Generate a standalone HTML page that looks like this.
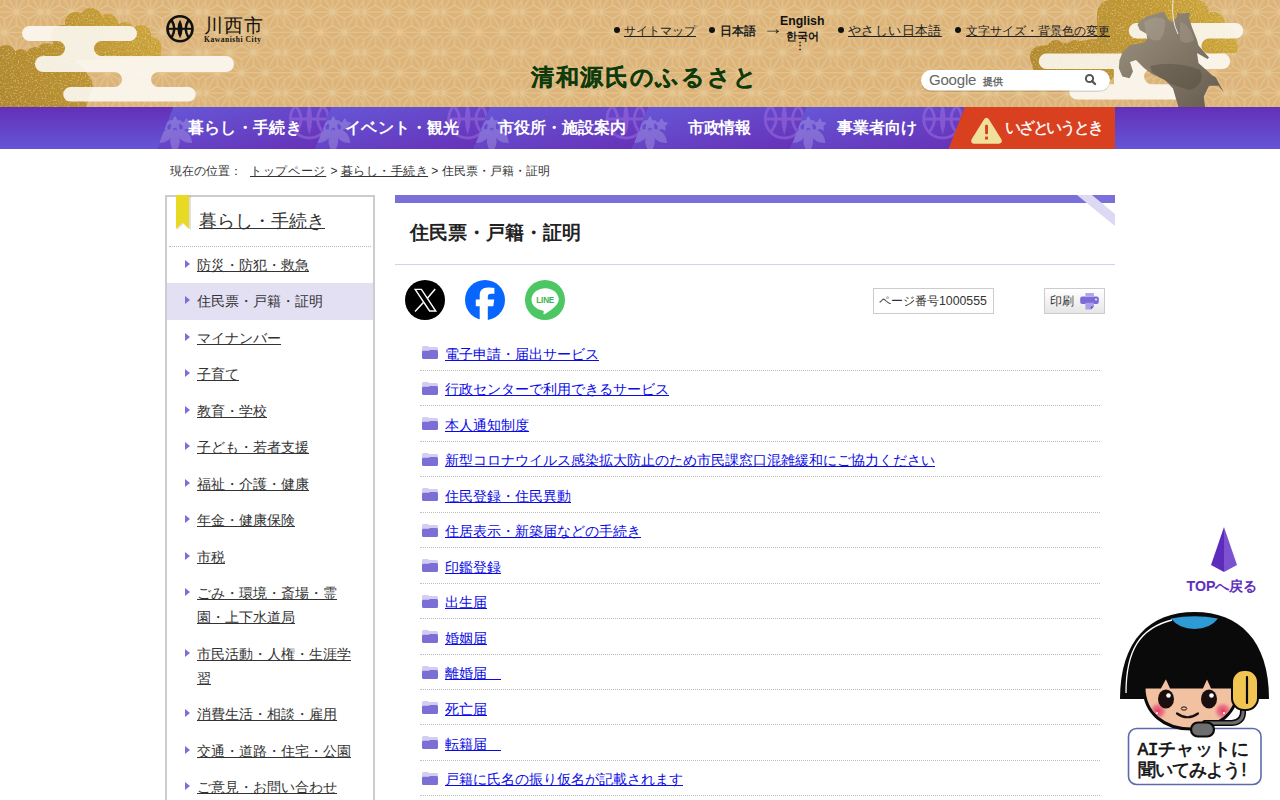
<!DOCTYPE html>
<html lang="ja"><head><meta charset="utf-8">
<style>
*{margin:0;padding:0;box-sizing:border-box}
html,body{width:1280px;height:800px;overflow:hidden;background:#fff}
body{font-family:"Liberation Sans",sans-serif;color:#222;position:relative}
.abs{position:absolute}
a{color:inherit}
#hdr{position:absolute;left:0;top:0;width:1280px;height:107px;overflow:hidden}
#nav{position:absolute;left:0;top:107px;width:1280px;height:42px;background:linear-gradient(#6330b8,#6555d5);overflow:hidden}
.toplink{position:absolute;font-size:13px;color:#222;top:22px;white-space:nowrap}
.toplink u{text-decoration:underline}
.dot{position:absolute;width:6px;height:6px;border-radius:50%;background:#111}
.navt{position:absolute;top:116px;color:#fff;font-weight:bold;font-size:16px;white-space:nowrap;line-height:24px}
#crumb{position:absolute;left:170px;top:162px;font-size:12px;color:#333;white-space:nowrap;line-height:18px}
#side{position:absolute;left:165px;top:195px;width:210px;height:620px;border:2px solid #ccc;border-bottom:none}
#side .ttl{position:absolute;left:32px;top:12px;font-size:18px;color:#333;text-decoration:underline}
#side .sep{position:absolute;left:2px;top:49px;width:202px;border-top:1px dotted #bbb}
.si{position:absolute;left:0;width:206px;font-size:14px;line-height:24px;color:#333}
.si span{position:absolute;left:30px;text-decoration:underline;white-space:nowrap}
.si i{position:absolute;left:18px;top:13px;width:0;height:0;border-left:5px solid #7b6fd9;border-top:4px solid transparent;border-bottom:4px solid transparent}
#main{position:absolute;left:395px;top:195px;width:720px}
.li{position:absolute;left:25px;width:680px;height:35.46px;border-bottom:1px dotted #bdbdbd}
.li a{position:absolute;left:25px;top:6.5px;font-size:14px;line-height:24px;text-decoration:underline;white-space:nowrap;color:#0a0ae6}
.fold{position:absolute;left:2px;top:11px;width:16px;height:13px}
</style></head><body>
<div id="hdr">
<svg width="1280" height="107" style="position:absolute;left:0;top:0">
<defs>
<pattern id="asa" patternUnits="userSpaceOnUse" width="79" height="40.5" x="46.5" y="12">
<rect width="79" height="40.5" fill="#dcb47a"/>
<path d="M-35.00 -20.25L-11.00 -20.25 M-35.00 -20.25L-23.00 0.00 M-35.00 -20.25L-47.00 0.00 M-23.00 -13.50L-35.00 -20.25 M-23.00 -13.50L-11.00 -20.25 M-23.00 -13.50L-23.00 0.00 M-35.00 -6.75L-35.00 -20.25 M-35.00 -6.75L-47.00 0.00 M-35.00 -6.75L-23.00 0.00 M-11.00 -20.25L13.00 -20.25 M-11.00 -20.25L1.00 0.00 M-11.00 -20.25L-23.00 0.00 M1.00 -13.50L-11.00 -20.25 M1.00 -13.50L13.00 -20.25 M1.00 -13.50L1.00 0.00 M-11.00 -6.75L-11.00 -20.25 M-11.00 -6.75L-23.00 0.00 M-11.00 -6.75L1.00 0.00 M13.00 -20.25L37.00 -20.25 M13.00 -20.25L25.00 0.00 M13.00 -20.25L1.00 0.00 M25.00 -13.50L13.00 -20.25 M25.00 -13.50L37.00 -20.25 M25.00 -13.50L25.00 0.00 M13.00 -6.75L13.00 -20.25 M13.00 -6.75L1.00 0.00 M13.00 -6.75L25.00 0.00 M37.00 -20.25L61.00 -20.25 M37.00 -20.25L49.00 0.00 M37.00 -20.25L25.00 0.00 M49.00 -13.50L37.00 -20.25 M49.00 -13.50L61.00 -20.25 M49.00 -13.50L49.00 0.00 M37.00 -6.75L37.00 -20.25 M37.00 -6.75L25.00 0.00 M37.00 -6.75L49.00 0.00 M61.00 -20.25L85.00 -20.25 M61.00 -20.25L73.00 0.00 M61.00 -20.25L49.00 0.00 M73.00 -13.50L61.00 -20.25 M73.00 -13.50L85.00 -20.25 M73.00 -13.50L73.00 0.00 M61.00 -6.75L61.00 -20.25 M61.00 -6.75L49.00 0.00 M61.00 -6.75L73.00 0.00 M85.00 -20.25L109.00 -20.25 M85.00 -20.25L97.00 0.00 M85.00 -20.25L73.00 0.00 M97.00 -13.50L85.00 -20.25 M97.00 -13.50L109.00 -20.25 M97.00 -13.50L97.00 0.00 M85.00 -6.75L85.00 -20.25 M85.00 -6.75L73.00 0.00 M85.00 -6.75L97.00 0.00 M109.00 -20.25L133.00 -20.25 M109.00 -20.25L121.00 0.00 M109.00 -20.25L97.00 0.00 M121.00 -13.50L109.00 -20.25 M121.00 -13.50L133.00 -20.25 M121.00 -13.50L121.00 0.00 M109.00 -6.75L109.00 -20.25 M109.00 -6.75L97.00 0.00 M109.00 -6.75L121.00 0.00 M-47.00 0.00L-23.00 0.00 M-47.00 0.00L-35.00 20.25 M-47.00 0.00L-59.00 20.25 M-35.00 6.75L-47.00 0.00 M-35.00 6.75L-23.00 0.00 M-35.00 6.75L-35.00 20.25 M-47.00 13.50L-47.00 0.00 M-47.00 13.50L-59.00 20.25 M-47.00 13.50L-35.00 20.25 M-23.00 0.00L1.00 0.00 M-23.00 0.00L-11.00 20.25 M-23.00 0.00L-35.00 20.25 M-11.00 6.75L-23.00 0.00 M-11.00 6.75L1.00 0.00 M-11.00 6.75L-11.00 20.25 M-23.00 13.50L-23.00 0.00 M-23.00 13.50L-35.00 20.25 M-23.00 13.50L-11.00 20.25 M1.00 0.00L25.00 0.00 M1.00 0.00L13.00 20.25 M1.00 0.00L-11.00 20.25 M13.00 6.75L1.00 0.00 M13.00 6.75L25.00 0.00 M13.00 6.75L13.00 20.25 M1.00 13.50L1.00 0.00 M1.00 13.50L-11.00 20.25 M1.00 13.50L13.00 20.25 M25.00 0.00L49.00 0.00 M25.00 0.00L37.00 20.25 M25.00 0.00L13.00 20.25 M37.00 6.75L25.00 0.00 M37.00 6.75L49.00 0.00 M37.00 6.75L37.00 20.25 M25.00 13.50L25.00 0.00 M25.00 13.50L13.00 20.25 M25.00 13.50L37.00 20.25 M49.00 0.00L73.00 0.00 M49.00 0.00L61.00 20.25 M49.00 0.00L37.00 20.25 M61.00 6.75L49.00 0.00 M61.00 6.75L73.00 0.00 M61.00 6.75L61.00 20.25 M49.00 13.50L49.00 0.00 M49.00 13.50L37.00 20.25 M49.00 13.50L61.00 20.25 M73.00 0.00L97.00 0.00 M73.00 0.00L85.00 20.25 M73.00 0.00L61.00 20.25 M85.00 6.75L73.00 0.00 M85.00 6.75L97.00 0.00 M85.00 6.75L85.00 20.25 M73.00 13.50L73.00 0.00 M73.00 13.50L61.00 20.25 M73.00 13.50L85.00 20.25 M97.00 0.00L121.00 0.00 M97.00 0.00L109.00 20.25 M97.00 0.00L85.00 20.25 M109.00 6.75L97.00 0.00 M109.00 6.75L121.00 0.00 M109.00 6.75L109.00 20.25 M97.00 13.50L97.00 0.00 M97.00 13.50L85.00 20.25 M97.00 13.50L109.00 20.25 M-35.00 20.25L-11.00 20.25 M-35.00 20.25L-23.00 40.50 M-35.00 20.25L-47.00 40.50 M-23.00 27.00L-35.00 20.25 M-23.00 27.00L-11.00 20.25 M-23.00 27.00L-23.00 40.50 M-35.00 33.75L-35.00 20.25 M-35.00 33.75L-47.00 40.50 M-35.00 33.75L-23.00 40.50 M-11.00 20.25L13.00 20.25 M-11.00 20.25L1.00 40.50 M-11.00 20.25L-23.00 40.50 M1.00 27.00L-11.00 20.25 M1.00 27.00L13.00 20.25 M1.00 27.00L1.00 40.50 M-11.00 33.75L-11.00 20.25 M-11.00 33.75L-23.00 40.50 M-11.00 33.75L1.00 40.50 M13.00 20.25L37.00 20.25 M13.00 20.25L25.00 40.50 M13.00 20.25L1.00 40.50 M25.00 27.00L13.00 20.25 M25.00 27.00L37.00 20.25 M25.00 27.00L25.00 40.50 M13.00 33.75L13.00 20.25 M13.00 33.75L1.00 40.50 M13.00 33.75L25.00 40.50 M37.00 20.25L61.00 20.25 M37.00 20.25L49.00 40.50 M37.00 20.25L25.00 40.50 M49.00 27.00L37.00 20.25 M49.00 27.00L61.00 20.25 M49.00 27.00L49.00 40.50 M37.00 33.75L37.00 20.25 M37.00 33.75L25.00 40.50 M37.00 33.75L49.00 40.50 M61.00 20.25L85.00 20.25 M61.00 20.25L73.00 40.50 M61.00 20.25L49.00 40.50 M73.00 27.00L61.00 20.25 M73.00 27.00L85.00 20.25 M73.00 27.00L73.00 40.50 M61.00 33.75L61.00 20.25 M61.00 33.75L49.00 40.50 M61.00 33.75L73.00 40.50 M85.00 20.25L109.00 20.25 M85.00 20.25L97.00 40.50 M85.00 20.25L73.00 40.50 M97.00 27.00L85.00 20.25 M97.00 27.00L109.00 20.25 M97.00 27.00L97.00 40.50 M85.00 33.75L85.00 20.25 M85.00 33.75L73.00 40.50 M85.00 33.75L97.00 40.50 M109.00 20.25L133.00 20.25 M109.00 20.25L121.00 40.50 M109.00 20.25L97.00 40.50 M121.00 27.00L109.00 20.25 M121.00 27.00L133.00 20.25 M121.00 27.00L121.00 40.50 M109.00 33.75L109.00 20.25 M109.00 33.75L97.00 40.50 M109.00 33.75L121.00 40.50 M-47.00 40.50L-23.00 40.50 M-47.00 40.50L-35.00 60.75 M-47.00 40.50L-59.00 60.75 M-35.00 47.25L-47.00 40.50 M-35.00 47.25L-23.00 40.50 M-35.00 47.25L-35.00 60.75 M-47.00 54.00L-47.00 40.50 M-47.00 54.00L-59.00 60.75 M-47.00 54.00L-35.00 60.75 M-23.00 40.50L1.00 40.50 M-23.00 40.50L-11.00 60.75 M-23.00 40.50L-35.00 60.75 M-11.00 47.25L-23.00 40.50 M-11.00 47.25L1.00 40.50 M-11.00 47.25L-11.00 60.75 M-23.00 54.00L-23.00 40.50 M-23.00 54.00L-35.00 60.75 M-23.00 54.00L-11.00 60.75 M1.00 40.50L25.00 40.50 M1.00 40.50L13.00 60.75 M1.00 40.50L-11.00 60.75 M13.00 47.25L1.00 40.50 M13.00 47.25L25.00 40.50 M13.00 47.25L13.00 60.75 M1.00 54.00L1.00 40.50 M1.00 54.00L-11.00 60.75 M1.00 54.00L13.00 60.75 M25.00 40.50L49.00 40.50 M25.00 40.50L37.00 60.75 M25.00 40.50L13.00 60.75 M37.00 47.25L25.00 40.50 M37.00 47.25L49.00 40.50 M37.00 47.25L37.00 60.75 M25.00 54.00L25.00 40.50 M25.00 54.00L13.00 60.75 M25.00 54.00L37.00 60.75 M49.00 40.50L73.00 40.50 M49.00 40.50L61.00 60.75 M49.00 40.50L37.00 60.75 M61.00 47.25L49.00 40.50 M61.00 47.25L73.00 40.50 M61.00 47.25L61.00 60.75 M49.00 54.00L49.00 40.50 M49.00 54.00L37.00 60.75 M49.00 54.00L61.00 60.75 M73.00 40.50L97.00 40.50 M73.00 40.50L85.00 60.75 M73.00 40.50L61.00 60.75 M85.00 47.25L73.00 40.50 M85.00 47.25L97.00 40.50 M85.00 47.25L85.00 60.75 M73.00 54.00L73.00 40.50 M73.00 54.00L61.00 60.75 M73.00 54.00L85.00 60.75 M97.00 40.50L121.00 40.50 M97.00 40.50L109.00 60.75 M97.00 40.50L85.00 60.75 M109.00 47.25L97.00 40.50 M109.00 47.25L121.00 40.50 M109.00 47.25L109.00 60.75 M97.00 54.00L97.00 40.50 M97.00 54.00L85.00 60.75 M97.00 54.00L109.00 60.75 M-35.00 60.75L-11.00 60.75 M-35.00 60.75L-23.00 81.00 M-35.00 60.75L-47.00 81.00 M-23.00 67.50L-35.00 60.75 M-23.00 67.50L-11.00 60.75 M-23.00 67.50L-23.00 81.00 M-35.00 74.25L-35.00 60.75 M-35.00 74.25L-47.00 81.00 M-35.00 74.25L-23.00 81.00 M-11.00 60.75L13.00 60.75 M-11.00 60.75L1.00 81.00 M-11.00 60.75L-23.00 81.00 M1.00 67.50L-11.00 60.75 M1.00 67.50L13.00 60.75 M1.00 67.50L1.00 81.00 M-11.00 74.25L-11.00 60.75 M-11.00 74.25L-23.00 81.00 M-11.00 74.25L1.00 81.00 M13.00 60.75L37.00 60.75 M13.00 60.75L25.00 81.00 M13.00 60.75L1.00 81.00 M25.00 67.50L13.00 60.75 M25.00 67.50L37.00 60.75 M25.00 67.50L25.00 81.00 M13.00 74.25L13.00 60.75 M13.00 74.25L1.00 81.00 M13.00 74.25L25.00 81.00 M37.00 60.75L61.00 60.75 M37.00 60.75L49.00 81.00 M37.00 60.75L25.00 81.00 M49.00 67.50L37.00 60.75 M49.00 67.50L61.00 60.75 M49.00 67.50L49.00 81.00 M37.00 74.25L37.00 60.75 M37.00 74.25L25.00 81.00 M37.00 74.25L49.00 81.00 M61.00 60.75L85.00 60.75 M61.00 60.75L73.00 81.00 M61.00 60.75L49.00 81.00 M73.00 67.50L61.00 60.75 M73.00 67.50L85.00 60.75 M73.00 67.50L73.00 81.00 M61.00 74.25L61.00 60.75 M61.00 74.25L49.00 81.00 M61.00 74.25L73.00 81.00 M85.00 60.75L109.00 60.75 M85.00 60.75L97.00 81.00 M85.00 60.75L73.00 81.00 M97.00 67.50L85.00 60.75 M97.00 67.50L109.00 60.75 M97.00 67.50L97.00 81.00 M85.00 74.25L85.00 60.75 M85.00 74.25L73.00 81.00 M85.00 74.25L97.00 81.00 M109.00 60.75L133.00 60.75 M109.00 60.75L121.00 81.00 M109.00 60.75L97.00 81.00 M121.00 67.50L109.00 60.75 M121.00 67.50L133.00 60.75 M121.00 67.50L121.00 81.00 M109.00 74.25L109.00 60.75 M109.00 74.25L97.00 81.00 M109.00 74.25L121.00 81.00" stroke="#e6c793" stroke-width="1.1" fill="none"/>
</pattern>
<linearGradient id="goldL" gradientUnits="userSpaceOnUse" x1="160" y1="10" x2="0" y2="107">
<stop offset="0" stop-color="#d6ae3a"/><stop offset="0.5" stop-color="#c0942c"/><stop offset="1" stop-color="#b08428"/>
</linearGradient>
<filter id="grain" x="0" y="0" width="100%" height="100%">
<feTurbulence type="fractalNoise" baseFrequency="0.6" numOctaves="2" seed="4" result="n"/>
<feColorMatrix in="n" type="matrix" values="0 0 0 0 0.42  0 0 0 0 0.29  0 0 0 0 0.07  0 0 2.6 0 -1.2" result="d"/>
<feComposite in="d" in2="SourceGraphic" operator="in" result="d2"/>
<feColorMatrix in="n" type="matrix" values="0 0 0 0 0.86  0 0 0 0 0.72  0 0 0 0 0.3  0 1.6 0 0 -0.85" result="l"/>
<feComposite in="l" in2="SourceGraphic" operator="in" result="l2"/>
<feMerge><feMergeNode in="SourceGraphic"/><feMergeNode in="d2"/><feMergeNode in="l2"/></feMerge>
</filter>
<linearGradient id="goldR" gradientUnits="userSpaceOnUse" x1="1030" y1="80" x2="1237" y2="0">
<stop offset="0" stop-color="#b48828"/><stop offset="0.6" stop-color="#c69a30"/><stop offset="1" stop-color="#d8b03a"/>
</linearGradient>
<linearGradient id="bronze" x1="0" y1="0" x2="1" y2="1">
<stop offset="0" stop-color="#9e9483"/><stop offset="0.5" stop-color="#837868"/><stop offset="1" stop-color="#655b4d"/>
</linearGradient>
</defs>
<rect width="1280" height="107" fill="url(#asa)"/>
<!-- left gold clouds -->
<g fill="url(#goldL)" filter="url(#grain)">
<circle cx="6" cy="55" r="10"/><circle cx="21" cy="58" r="9"/><circle cx="35" cy="56" r="9"/><circle cx="46" cy="52" r="9"/>
<rect x="0" y="54" width="50" height="53"/>
<polygon points="40,50 52,44 65,50 85,70 93,86 86,107 0,107"/>
<circle cx="80" cy="84" r="12"/>
<circle cx="62" cy="36" r="11"/><circle cx="76" cy="23" r="11"/><circle cx="91" cy="19" r="11"/><circle cx="108" cy="24" r="10"/><circle cx="125" cy="31" r="9"/><circle cx="141" cy="35" r="10"/><circle cx="152" cy="46" r="9"/><circle cx="154" cy="48.5" r="7.5"/>
<polygon points="52,45 62,30 76,16 91,12 108,18 125,26 141,30 161,45 161,56 94,60 65,60"/>
</g>
<!-- left white clouds -->
<g fill="#fcf9f4" fill-opacity="0.9">
<path d="M29.5 26H129.5A7.5 7.5 0 0 1 129.5 41H101.5A7.5 7.5 0 0 0 101.5 56H226A8 8 0 0 1 226 72H158.5A7.5 7.5 0 0 0 158.5 87H188.5A7.3 7.3 0 0 1 188.5 101.6H70.5A7.3 7.3 0 0 1 70.5 87H114.5A7.5 7.5 0 0 0 114.5 72H43A8 8 0 0 1 43 56H57.5A7.5 7.5 0 0 0 57.5 41H29.5A7.5 7.5 0 0 1 29.5 26Z"/>
</g>
<!-- right gold cloud -->
<g fill="url(#goldR)" filter="url(#grain)">
<circle cx="1104" cy="73" r="10"/><circle cx="1040" cy="56" r="10"/><circle cx="1056" cy="50" r="10"/><circle cx="1075" cy="49" r="9"/><circle cx="1092" cy="48" r="9"/>
<circle cx="1111" cy="14" r="14"/><circle cx="1196" cy="13" r="13"/><circle cx="1213" cy="24" r="12"/><circle cx="1226" cy="36" r="10"/><circle cx="1230" cy="45.5" r="7.5"/>
<rect x="1111" y="0" width="85" height="45"/><rect x="1097" y="14" width="120" height="40"/>
<polygon points="1030,58 1040,46 1097,39 1200,39 1237.5,45 1237.5,53 1160,53 1110,70 1104,83 1034,72"/>
</g>
<g fill="#fcf9f4" fill-opacity="0.9">
<path d="M1136.5 23H1235.5A7.7 7.7 0 0 1 1235.5 38.4H1209A7.6 7.6 0 0 0 1209 53.6H1222.5A7.7 7.7 0 0 1 1222.5 69H1151.6A7.6 7.6 0 0 0 1151.6 84.2H1182A7.6 7.6 0 0 1 1182 99.5H1077A7.6 7.6 0 0 1 1077 84.2H1114V69H1046.5A7.7 7.7 0 0 1 1046.5 53.6H1160V38.4H1136.5A7.7 7.7 0 0 1 1136.5 23Z"/>
</g>
<!-- statue -->
<g>
<path fill="url(#bronze)" d="M1137.5 24.8L1140.0 20.5L1148.0 16.0L1157.0 13.5L1163.8 11.2L1167.5 18.8L1172.0 22.0L1177.0 17.0L1177.0 12.7L1181.0 13.4L1190.0 12.7L1189.0 17.4L1191.8 26.8L1197.0 40.0L1198.5 45.5L1209.0 57.6L1207.5 59.0L1197.0 53.0L1198.5 63.0L1211.8 75.0L1215.9 77.6L1223.9 92.4L1218.5 85.7L1209.0 85.7L1203.8 96.4L1205.0 107.0L1178.4 107.0L1173.0 88.4L1165.0 80.0L1152.0 74.0L1144.0 68.0L1136.0 60.0L1130.0 62.0L1133.0 71.5L1129.6 78.2L1122.4 76.4L1118.8 68.3L1119.5 60.0L1122.5 52.5L1130.0 45.0L1143.5 42.8L1147.3 39.0L1146.5 33.8L1139.8 30.0Z"/>
</g>
<g opacity="0.35">
<path d="M1144 22Q1156 14 1165 20Q1166 32 1160 40Q1150 42 1146 34Z" fill="#b8ae9c"/>
<path d="M1180 22Q1190 24 1194 40Q1186 46 1180 40Z" fill="#b0a694"/>
<path d="M1150 66Q1175 60 1200 70Q1206 84 1190 90Q1170 86 1152 72Z" fill="#4a4236"/>
</g>
<path d="M1173 0Q1171 20 1178 34" fill="none" stroke="#f0ece0" stroke-width="1"/>
<!-- logo -->
<g>
<circle cx="180" cy="28.8" r="12.5" fill="none" stroke="#111" stroke-width="2.6"/>
<line x1="167" y1="28.8" x2="193" y2="28.8" stroke="#111" stroke-width="2"/>
<path d="M180 19.5Q185.2 28.8 180 38.2Q174.8 28.8 180 19.5Z" fill="#111"/>
<path d="M171.5 20Q177 28.8 171.5 37.6" fill="none" stroke="#111" stroke-width="2.5"/>
<path d="M188.5 20Q183 28.8 188.5 37.6" fill="none" stroke="#111" stroke-width="2.5"/>
</g>
<!-- search -->
<rect x="921" y="71" width="189" height="21" rx="10.5" fill="#000" opacity="0.12"/><rect x="921" y="70" width="189" height="20.5" rx="10.25" fill="#fff"/><circle cx="1089.5" cy="78.5" r="3.6" fill="none" stroke="#555" stroke-width="2"/><path d="M1092 81L1095 84" stroke="#555" stroke-width="2.4" stroke-linecap="round"/>
</svg>
<div class="abs" style="left:203.5px;top:12.5px;font-size:19px;font-family:'Liberation Serif',serif;color:#111;letter-spacing:1.2px">川西市</div>
<div class="abs" style="left:204px;top:34.5px;font-size:7.5px;font-family:'Liberation Serif',serif;font-weight:bold;color:#111;letter-spacing:0.55px">Kawanishi City</div>
<div class="dot" style="left:614px;top:27px"></div>
<div class="toplink" style="left:624px;font-size:12px;top:23px"><u>サイトマップ</u></div>
<div class="dot" style="left:709px;top:27px"></div>
<div class="toplink" style="left:720px;font-weight:bold;font-size:12.3px;top:23px">日本語</div>
<div class="toplink" style="left:763px;top:18px;font-size:18px;transform:scaleX(1.1);transform-origin:left">→</div>
<div class="abs" style="left:780px;top:14px;font-size:12.3px;font-weight:bold;color:#111">English</div>
<div class="abs" style="left:786px;top:28.5px;font-size:11px;color:#111;font-weight:bold">한국어</div>
<div class="abs" style="left:795px;top:40px;font-size:10px;line-height:11px;color:#111;font-weight:bold">⋮</div>
<div class="dot" style="left:838px;top:27px"></div>
<div class="toplink" style="left:848px;font-size:13px;letter-spacing:0.4px"><u>やさしい日本語</u></div>
<div class="dot" style="left:955px;top:27px"></div>
<div class="toplink" style="left:966px;font-size:12px;top:23px"><u>文字サイズ・背景色の変更</u></div>
<div class="abs" style="left:531px;top:62px;font-size:23px;font-weight:bold;color:#0f3a0c;font-family:'Liberation Serif',serif;letter-spacing:1.7px;-webkit-text-stroke:0.25px #0f3a0c">清和源氏のふるさと</div>
<div class="abs" style="left:929px;top:71px;font-size:15px;color:#666;letter-spacing:-0.2px">Google</div>
<div class="abs" style="left:983px;top:75px;font-size:10px;color:#666;font-weight:bold">提供</div>
</div>
<div id="nav">
<svg width="1280" height="42" style="position:absolute;left:0;top:0">
<defs>
<linearGradient id="itm" x1="0" y1="0" x2="1" y2="1"><stop offset="0" stop-color="#6658d8"/><stop offset="1" stop-color="#6630b6"/></linearGradient>
<clipPath id="c0"><polygon points="173.0,0 331.3,0 315.3,42 157.0,42"/></clipPath>
<clipPath id="c1"><polygon points="331.3,0 489.7,0 473.7,42 315.3,42"/></clipPath>
<clipPath id="c2"><polygon points="489.7,0 648.0,0 632.0,42 473.7,42"/></clipPath>
<clipPath id="c3"><polygon points="648.0,0 806.3,0 790.3,42 632.0,42"/></clipPath>
<clipPath id="c4"><polygon points="806.3,0 964.7,0 948.7,42 790.3,42"/></clipPath>
</defs>
<g clip-path="url(#c0)"><polygon points="173.0,0 331.3,0 315.3,42 157.0,42" fill="url(#itm)"/><g fill="#fff" opacity="0.2"><path d="M173.5 22C180.25 28.3 179.5 36.7 173.5 43C167.5 36.7 166.75 28.3 173.5 22Z" transform="rotate(48 173.5 22)"/><path d="M175.0 22C181.75 29.2 181.0 38.8 175.0 46C169.0 38.8 168.25 29.2 175.0 22Z" transform="rotate(0 175.0 22)"/><path d="M176.5 22C183.25 28.3 182.5 36.7 176.5 43C170.5 36.7 169.75 28.3 176.5 22Z" transform="rotate(-48 176.5 22)"/><path d="M163.5 12.5L165.1 15.8L168.7 16.3L166.1 18.8L166.7 22.4L163.5 20.7L160.3 22.4L160.9 18.8L158.3 16.3L161.9 15.8Z" stroke="#fff" stroke-width="2" stroke-linejoin="round"/><path d="M175.0 10.5L176.8 14.1L180.7 14.6L177.9 17.4L178.5 21.4L175.0 19.5L171.5 21.4L172.1 17.4L169.3 14.6L173.2 14.1Z" stroke="#fff" stroke-width="2" stroke-linejoin="round"/><path d="M186.5 12.5L188.1 15.8L191.7 16.3L189.1 18.8L189.7 22.4L186.5 20.7L183.3 22.4L183.9 18.8L181.3 16.3L184.9 15.8Z" stroke="#fff" stroke-width="2" stroke-linejoin="round"/></g><g opacity="0.42"><g stroke="#b07ae8" fill="none" stroke-width="2.8"><circle cx="309.3" cy="12" r="19"/><line x1="290.3" y1="12" x2="328.3" y2="12"/><path d="M295.6 -1.3Q306.4 12 295.6 25.3"/><path d="M323.0 -1.3Q312.2 12 323.0 25.3"/></g><path d="M309.3 -4.1Q315.0 12 309.3 28.1Q303.6 12 309.3 -4.1Z" fill="#b07ae8"/></g></g>
<g clip-path="url(#c1)"><polygon points="331.3,0 489.7,0 473.7,42 315.3,42" fill="url(#itm)"/><g fill="#fff" opacity="0.2"><path d="M331.8 22C338.55 28.3 337.8 36.7 331.8 43C325.8 36.7 325.05 28.3 331.8 22Z" transform="rotate(48 331.8 22)"/><path d="M333.3 22C340.05 29.2 339.3 38.8 333.3 46C327.3 38.8 326.55 29.2 333.3 22Z" transform="rotate(0 333.3 22)"/><path d="M334.8 22C341.55 28.3 340.8 36.7 334.8 43C328.8 36.7 328.05 28.3 334.8 22Z" transform="rotate(-48 334.8 22)"/><path d="M321.8 12.5L323.4 15.8L327.0 16.3L324.4 18.8L325.0 22.4L321.8 20.7L318.6 22.4L319.2 18.8L316.6 16.3L320.2 15.8Z" stroke="#fff" stroke-width="2" stroke-linejoin="round"/><path d="M333.3 10.5L335.1 14.1L339.0 14.6L336.2 17.4L336.8 21.4L333.3 19.5L329.8 21.4L330.4 17.4L327.6 14.6L331.5 14.1Z" stroke="#fff" stroke-width="2" stroke-linejoin="round"/><path d="M344.8 12.5L346.4 15.8L350.0 16.3L347.4 18.8L348.0 22.4L344.8 20.7L341.6 22.4L342.2 18.8L339.6 16.3L343.2 15.8Z" stroke="#fff" stroke-width="2" stroke-linejoin="round"/></g><g opacity="0.42"><g stroke="#b07ae8" fill="none" stroke-width="2.8"><circle cx="467.7" cy="12" r="19"/><line x1="448.7" y1="12" x2="486.7" y2="12"/><path d="M454.0 -1.3Q464.8 12 454.0 25.3"/><path d="M481.4 -1.3Q470.6 12 481.4 25.3"/></g><path d="M467.7 -4.1Q473.4 12 467.7 28.1Q462.0 12 467.7 -4.1Z" fill="#b07ae8"/></g></g>
<g clip-path="url(#c2)"><polygon points="489.7,0 648.0,0 632.0,42 473.7,42" fill="url(#itm)"/><g fill="#fff" opacity="0.2"><path d="M490.2 22C496.95 28.3 496.2 36.7 490.2 43C484.2 36.7 483.45 28.3 490.2 22Z" transform="rotate(48 490.2 22)"/><path d="M491.7 22C498.45 29.2 497.7 38.8 491.7 46C485.7 38.8 484.95 29.2 491.7 22Z" transform="rotate(0 491.7 22)"/><path d="M493.2 22C499.95 28.3 499.2 36.7 493.2 43C487.2 36.7 486.45 28.3 493.2 22Z" transform="rotate(-48 493.2 22)"/><path d="M480.2 12.5L481.8 15.8L485.4 16.3L482.8 18.8L483.4 22.4L480.2 20.7L477.0 22.4L477.6 18.8L475.0 16.3L478.6 15.8Z" stroke="#fff" stroke-width="2" stroke-linejoin="round"/><path d="M491.7 10.5L493.5 14.1L497.4 14.6L494.6 17.4L495.2 21.4L491.7 19.5L488.2 21.4L488.8 17.4L486.0 14.6L489.9 14.1Z" stroke="#fff" stroke-width="2" stroke-linejoin="round"/><path d="M503.2 12.5L504.8 15.8L508.4 16.3L505.8 18.8L506.4 22.4L503.2 20.7L500.0 22.4L500.6 18.8L498.0 16.3L501.6 15.8Z" stroke="#fff" stroke-width="2" stroke-linejoin="round"/></g><g opacity="0.42"><g stroke="#b07ae8" fill="none" stroke-width="2.8"><circle cx="626.0" cy="12" r="19"/><line x1="607.0" y1="12" x2="645.0" y2="12"/><path d="M612.3 -1.3Q623.1 12 612.3 25.3"/><path d="M639.7 -1.3Q628.9 12 639.7 25.3"/></g><path d="M626.0 -4.1Q631.7 12 626.0 28.1Q620.3 12 626.0 -4.1Z" fill="#b07ae8"/></g></g>
<g clip-path="url(#c3)"><polygon points="648.0,0 806.3,0 790.3,42 632.0,42" fill="url(#itm)"/><g fill="#fff" opacity="0.2"><path d="M648.5 22C655.25 28.3 654.5 36.7 648.5 43C642.5 36.7 641.75 28.3 648.5 22Z" transform="rotate(48 648.5 22)"/><path d="M650.0 22C656.75 29.2 656.0 38.8 650.0 46C644.0 38.8 643.25 29.2 650.0 22Z" transform="rotate(0 650.0 22)"/><path d="M651.5 22C658.25 28.3 657.5 36.7 651.5 43C645.5 36.7 644.75 28.3 651.5 22Z" transform="rotate(-48 651.5 22)"/><path d="M638.5 12.5L640.1 15.8L643.7 16.3L641.1 18.8L641.7 22.4L638.5 20.7L635.3 22.4L635.9 18.8L633.3 16.3L636.9 15.8Z" stroke="#fff" stroke-width="2" stroke-linejoin="round"/><path d="M650.0 10.5L651.8 14.1L655.7 14.6L652.9 17.4L653.5 21.4L650.0 19.5L646.5 21.4L647.1 17.4L644.3 14.6L648.2 14.1Z" stroke="#fff" stroke-width="2" stroke-linejoin="round"/><path d="M661.5 12.5L663.1 15.8L666.7 16.3L664.1 18.8L664.7 22.4L661.5 20.7L658.3 22.4L658.9 18.8L656.3 16.3L659.9 15.8Z" stroke="#fff" stroke-width="2" stroke-linejoin="round"/></g><g opacity="0.42"><g stroke="#b07ae8" fill="none" stroke-width="2.8"><circle cx="784.3" cy="12" r="19"/><line x1="765.3" y1="12" x2="803.3" y2="12"/><path d="M770.6 -1.3Q781.4 12 770.6 25.3"/><path d="M798.0 -1.3Q787.1 12 798.0 25.3"/></g><path d="M784.3 -4.1Q790.0 12 784.3 28.1Q778.6 12 784.3 -4.1Z" fill="#b07ae8"/></g></g>
<g clip-path="url(#c4)"><polygon points="806.3,0 964.7,0 948.7,42 790.3,42" fill="url(#itm)"/><g fill="#fff" opacity="0.2"><path d="M806.8 22C813.55 28.3 812.8 36.7 806.8 43C800.8 36.7 800.05 28.3 806.8 22Z" transform="rotate(48 806.8 22)"/><path d="M808.3 22C815.05 29.2 814.3 38.8 808.3 46C802.3 38.8 801.55 29.2 808.3 22Z" transform="rotate(0 808.3 22)"/><path d="M809.8 22C816.55 28.3 815.8 36.7 809.8 43C803.8 36.7 803.05 28.3 809.8 22Z" transform="rotate(-48 809.8 22)"/><path d="M796.8 12.5L798.4 15.8L802.0 16.3L799.4 18.8L800.0 22.4L796.8 20.7L793.6 22.4L794.2 18.8L791.6 16.3L795.2 15.8Z" stroke="#fff" stroke-width="2" stroke-linejoin="round"/><path d="M808.3 10.5L810.1 14.1L814.0 14.6L811.2 17.4L811.8 21.4L808.3 19.5L804.8 21.4L805.4 17.4L802.6 14.6L806.5 14.1Z" stroke="#fff" stroke-width="2" stroke-linejoin="round"/><path d="M819.8 12.5L821.4 15.8L825.0 16.3L822.4 18.8L823.0 22.4L819.8 20.7L816.6 22.4L817.2 18.8L814.6 16.3L818.2 15.8Z" stroke="#fff" stroke-width="2" stroke-linejoin="round"/></g><g opacity="0.42"><g stroke="#b07ae8" fill="none" stroke-width="2.8"><circle cx="942.7" cy="12" r="19"/><line x1="923.7" y1="12" x2="961.7" y2="12"/><path d="M929.0 -1.3Q939.9 12 929.0 25.3"/><path d="M956.4 -1.3Q945.6 12 956.4 25.3"/></g><path d="M942.7 -4.1Q948.4 12 942.7 28.1Q937.0 12 942.7 -4.1Z" fill="#b07ae8"/></g></g>
<polygon points="964.7,0 1115,0 1115,42 948.7,42" fill="#d9401f"/>
<path d="M986.5 14L998.8 33.8H974.2Z" fill="#f0e09c" stroke="#f0e09c" stroke-width="6" stroke-linejoin="round"/>
<rect x="985.1" y="17.8" width="2.9" height="9.5" rx="1" fill="#d9401f"/><rect x="985.1" y="29.6" width="2.9" height="2.9" fill="#d9401f"/>
</svg>
</div>
<div class="navt" style="left:187.5px;letter-spacing:0.35px">暮らし・手続き</div>
<div class="navt" style="left:345px;letter-spacing:0.4px">イベント・観光</div>
<div class="navt" style="left:498px">市役所・施設案内</div>
<div class="navt" style="left:688px;letter-spacing:-0.3px">市政情報</div>
<div class="navt" style="left:837px">事業者向け</div>
<div class="navt" style="left:1005px;letter-spacing:-2.2px;font-weight:normal;-webkit-text-stroke:0.35px #fff">いざというとき</div>
<div id="crumb">現在の位置：</div>
<div id="crumb" style="left:250px;letter-spacing:0.7px"><u>トップページ</u></div>
<div id="crumb" style="left:330.5px">&gt;</div>
<div id="crumb" style="left:340.6px;letter-spacing:0.5px"><u>暮らし・手続き</u></div>
<div id="crumb" style="left:431.2px">&gt;</div>
<div id="crumb" style="left:442.2px">住民票・戸籍・証明</div>
<div id="side"><svg class="abs" style="left:8px;top:-2px" width="18" height="38"><path d="M1 0H15V34L8 27.6L1 34Z" fill="#000" opacity="0.12" transform="translate(1,1)"/><path d="M1 0H14V34L7.5 27.6L1 34Z" fill="#e8da22"/></svg><div class="ttl">暮らし・手続き</div><div class="sep"></div>
<div class="si" style="top:49.60px;height:36.50px;"><i></i><span style="top:6.25px;">防災・防犯・救急</span></div>
<div class="si" style="top:86.10px;height:36.50px;background:#e3e0f3;"><i></i><span style="top:6.25px;text-decoration:none">住民票・戸籍・証明</span></div>
<div class="si" style="top:122.60px;height:36.50px;"><i></i><span style="top:6.25px;">マイナンバー</span></div>
<div class="si" style="top:159.10px;height:36.50px;"><i></i><span style="top:6.25px;">子育て</span></div>
<div class="si" style="top:195.60px;height:36.50px;"><i></i><span style="top:6.25px;">教育・学校</span></div>
<div class="si" style="top:232.10px;height:36.50px;"><i></i><span style="top:6.25px;">子ども・若者支援</span></div>
<div class="si" style="top:268.60px;height:36.50px;"><i></i><span style="top:6.25px;">福祉・介護・健康</span></div>
<div class="si" style="top:305.10px;height:36.50px;"><i></i><span style="top:6.25px;">年金・健康保険</span></div>
<div class="si" style="top:341.60px;height:36.50px;"><i></i><span style="top:6.25px;">市税</span></div>
<div class="si" style="top:378.10px;height:60.50px;"><i></i><span style="top:6.25px;">ごみ・環境・斎場・霊<br>園・上下水道局</span></div>
<div class="si" style="top:438.60px;height:60.50px;"><i></i><span style="top:6.25px;">市民活動・人権・生涯学<br>習</span></div>
<div class="si" style="top:499.10px;height:36.50px;"><i></i><span style="top:6.25px;">消費生活・相談・雇用</span></div>
<div class="si" style="top:535.60px;height:36.50px;"><i></i><span style="top:6.25px;">交通・道路・住宅・公園</span></div>
<div class="si" style="top:572.10px;height:36.50px;"><i></i><span style="top:6.25px;">ご意見・お問い合わせ</span></div>
</div>
<div id="main">
<div class="abs" style="left:0;top:0;width:720px;height:8px;background:#7b6fd9"></div>
<svg class="abs" style="left:0;top:0" width="720" height="40"><polygon points="682,0 697,0 720,19 720,31" fill="#ddd8f3"/></svg>
<div class="abs" style="left:15px;top:25px;font-size:19px;font-weight:bold;color:#222;line-height:26px">住民票・戸籍・証明</div>
<div class="abs" style="left:0;top:68.5px;width:720px;height:1px;background:#d3cff0"></div>
<svg class="abs" style="left:10px;top:85px" width="160" height="40">
<circle cx="20" cy="20" r="20" fill="#000"/>
<path d="M10.2 9.4H16.4L30.8 31H24.6Z" fill="none" stroke="#fff" stroke-width="1.4" stroke-linejoin="miter"/>
<path d="M30.2 9L22.4 18.2M18.4 22.6L10 31.6" stroke="#fff" stroke-width="1.5"/>
<circle cx="80" cy="20" r="20" fill="#0866ff"/>
<path d="M74.7 40V26.3H70.8V19.6H74.7V15.8C74.7 10.3 77.6 7.6 83 7.6C85.2 7.6 87.8 7.8 89.4 8.1V13.8H86.2C83.8 13.8 82.8 14.9 82.8 17V19.6H89.2L88.3 26.3H82.8V40Z" fill="#fff"/>
<circle cx="140" cy="20" r="20" fill="#4cc764"/>
<path d="M140.2 8.3C132.6 8.3 126.5 13.4 126.5 19.5C126.5 25 131.3 29.5 137.8 30.5C138.6 30.7 138.9 31.3 138.7 32L138.4 33.6C138.3 34.2 138.8 34.6 139.5 34.2C143.5 32 153.8 25.5 153.8 19.5C153.8 13.4 147.8 8.3 140.2 8.3Z" fill="#fff"/>
<text x="140.2" y="22.6" font-size="8.2" font-weight="bold" fill="#3bb550" text-anchor="middle" font-family="Liberation Sans" letter-spacing="-0.2">LINE</text>
</svg>
<div class="abs" style="left:478px;top:93px;width:121px;height:26px;border:1px solid #ccc;font-size:12.3px;line-height:24px;padding-left:5px;color:#333;white-space:nowrap">ページ番号1000555</div>
<div class="abs" style="left:649px;top:93px;width:61px;height:26px;border:1px solid #ccc;background:linear-gradient(#fff,#e6e6e6);font-size:12.3px;line-height:24px;padding-left:5px;color:#333">印刷
<svg class="abs" style="left:35px;top:4px" width="20" height="18"><rect x="5.4" y="0" width="8.5" height="3" fill="#b0a6ec"/><rect x="0.2" y="3.5" width="18.6" height="7.5" rx="2" fill="#7b6cd8"/><circle cx="16" cy="6.5" r="0.9" fill="#fff"/><path d="M5.4 9.7H13.9V13.6L10.9 16.6H5.4Z" fill="#aa9fea"/><path d="M13.9 13.6L10.9 16.6V13.6Z" fill="#5f50cc"/></svg></div>
<div class="li" style="top:140.40px"><svg class="fold" viewBox="0 0 16 13"><path d="M0 1.5Q0 0 1.5 0H6L7 1H14.5Q16 1 16 2.5V6H0Z" fill="#d3cdf2"/><path d="M0 6Q0 4.8 1.5 4.8H7L8 4H14.5Q16 4 16 5.5V11.5Q16 13 14.5 13H1.5Q0 13 0 11.5Z" fill="#7b6fd6"/></svg><a>電子申請・届出サービス</a></div>
<div class="li" style="top:175.86px"><svg class="fold" viewBox="0 0 16 13"><path d="M0 1.5Q0 0 1.5 0H6L7 1H14.5Q16 1 16 2.5V6H0Z" fill="#d3cdf2"/><path d="M0 6Q0 4.8 1.5 4.8H7L8 4H14.5Q16 4 16 5.5V11.5Q16 13 14.5 13H1.5Q0 13 0 11.5Z" fill="#7b6fd6"/></svg><a>行政センターで利用できるサービス</a></div>
<div class="li" style="top:211.32px"><svg class="fold" viewBox="0 0 16 13"><path d="M0 1.5Q0 0 1.5 0H6L7 1H14.5Q16 1 16 2.5V6H0Z" fill="#d3cdf2"/><path d="M0 6Q0 4.8 1.5 4.8H7L8 4H14.5Q16 4 16 5.5V11.5Q16 13 14.5 13H1.5Q0 13 0 11.5Z" fill="#7b6fd6"/></svg><a>本人通知制度</a></div>
<div class="li" style="top:246.78px"><svg class="fold" viewBox="0 0 16 13"><path d="M0 1.5Q0 0 1.5 0H6L7 1H14.5Q16 1 16 2.5V6H0Z" fill="#d3cdf2"/><path d="M0 6Q0 4.8 1.5 4.8H7L8 4H14.5Q16 4 16 5.5V11.5Q16 13 14.5 13H1.5Q0 13 0 11.5Z" fill="#7b6fd6"/></svg><a>新型コロナウイルス感染拡大防止のため市民課窓口混雑緩和にご協力ください</a></div>
<div class="li" style="top:282.24px"><svg class="fold" viewBox="0 0 16 13"><path d="M0 1.5Q0 0 1.5 0H6L7 1H14.5Q16 1 16 2.5V6H0Z" fill="#d3cdf2"/><path d="M0 6Q0 4.8 1.5 4.8H7L8 4H14.5Q16 4 16 5.5V11.5Q16 13 14.5 13H1.5Q0 13 0 11.5Z" fill="#7b6fd6"/></svg><a>住民登録・住民異動</a></div>
<div class="li" style="top:317.70px"><svg class="fold" viewBox="0 0 16 13"><path d="M0 1.5Q0 0 1.5 0H6L7 1H14.5Q16 1 16 2.5V6H0Z" fill="#d3cdf2"/><path d="M0 6Q0 4.8 1.5 4.8H7L8 4H14.5Q16 4 16 5.5V11.5Q16 13 14.5 13H1.5Q0 13 0 11.5Z" fill="#7b6fd6"/></svg><a>住居表示・新築届などの手続き</a></div>
<div class="li" style="top:353.16px"><svg class="fold" viewBox="0 0 16 13"><path d="M0 1.5Q0 0 1.5 0H6L7 1H14.5Q16 1 16 2.5V6H0Z" fill="#d3cdf2"/><path d="M0 6Q0 4.8 1.5 4.8H7L8 4H14.5Q16 4 16 5.5V11.5Q16 13 14.5 13H1.5Q0 13 0 11.5Z" fill="#7b6fd6"/></svg><a>印鑑登録</a></div>
<div class="li" style="top:388.62px"><svg class="fold" viewBox="0 0 16 13"><path d="M0 1.5Q0 0 1.5 0H6L7 1H14.5Q16 1 16 2.5V6H0Z" fill="#d3cdf2"/><path d="M0 6Q0 4.8 1.5 4.8H7L8 4H14.5Q16 4 16 5.5V11.5Q16 13 14.5 13H1.5Q0 13 0 11.5Z" fill="#7b6fd6"/></svg><a>出生届</a></div>
<div class="li" style="top:424.08px"><svg class="fold" viewBox="0 0 16 13"><path d="M0 1.5Q0 0 1.5 0H6L7 1H14.5Q16 1 16 2.5V6H0Z" fill="#d3cdf2"/><path d="M0 6Q0 4.8 1.5 4.8H7L8 4H14.5Q16 4 16 5.5V11.5Q16 13 14.5 13H1.5Q0 13 0 11.5Z" fill="#7b6fd6"/></svg><a>婚姻届</a></div>
<div class="li" style="top:459.54px"><svg class="fold" viewBox="0 0 16 13"><path d="M0 1.5Q0 0 1.5 0H6L7 1H14.5Q16 1 16 2.5V6H0Z" fill="#d3cdf2"/><path d="M0 6Q0 4.8 1.5 4.8H7L8 4H14.5Q16 4 16 5.5V11.5Q16 13 14.5 13H1.5Q0 13 0 11.5Z" fill="#7b6fd6"/></svg><a>離婚届　</a></div>
<div class="li" style="top:495.00px"><svg class="fold" viewBox="0 0 16 13"><path d="M0 1.5Q0 0 1.5 0H6L7 1H14.5Q16 1 16 2.5V6H0Z" fill="#d3cdf2"/><path d="M0 6Q0 4.8 1.5 4.8H7L8 4H14.5Q16 4 16 5.5V11.5Q16 13 14.5 13H1.5Q0 13 0 11.5Z" fill="#7b6fd6"/></svg><a>死亡届</a></div>
<div class="li" style="top:530.46px"><svg class="fold" viewBox="0 0 16 13"><path d="M0 1.5Q0 0 1.5 0H6L7 1H14.5Q16 1 16 2.5V6H0Z" fill="#d3cdf2"/><path d="M0 6Q0 4.8 1.5 4.8H7L8 4H14.5Q16 4 16 5.5V11.5Q16 13 14.5 13H1.5Q0 13 0 11.5Z" fill="#7b6fd6"/></svg><a>転籍届　</a></div>
<div class="li" style="top:565.92px"><svg class="fold" viewBox="0 0 16 13"><path d="M0 1.5Q0 0 1.5 0H6L7 1H14.5Q16 1 16 2.5V6H0Z" fill="#d3cdf2"/><path d="M0 6Q0 4.8 1.5 4.8H7L8 4H14.5Q16 4 16 5.5V11.5Q16 13 14.5 13H1.5Q0 13 0 11.5Z" fill="#7b6fd6"/></svg><a>戸籍に氏名の振り仮名が記載されます</a></div>
</div>
<svg class="abs" style="left:1205px;top:525px" width="40" height="50"><polygon points="19,2 6,40 19,47" fill="#5e2cbd"/><polygon points="19,2 32,40 19,47" fill="#7c52d0"/></svg>
<div class="abs" style="left:1186.5px;top:577px;font-size:14.2px;font-weight:bold;color:#5e2fc0;white-space:nowrap">TOPへ戻る</div>
<svg class="abs" style="left:1110px;top:600px" width="170" height="200" viewBox="1110 600 170 200">
<rect x="1128.5" y="728.5" width="132.5" height="56" rx="8" fill="#fff" stroke="#5b6baa" stroke-width="1.6"/>
<path d="M1120 699C1120 640 1150 612 1194.5 612C1239 612 1269 640 1269 699Z" fill="#0a0a0a"/>
<path d="M1171 618.5Q1194.5 614 1218 618.5Q1210 629 1194.5 629Q1179 629 1171 618.5Z" fill="#2e9bd6"/>
<path d="M1126 693C1126 650 1140 628 1172 620" fill="none" stroke="#fff" stroke-width="1.3"/>
<path d="M1144 687L1160 687L1166 676L1171 687L1202 687L1207 676L1212 687L1238 687C1238 713 1218 729 1191 729C1164 729 1144 713 1144 687Z" fill="#f1c1a1" stroke="#0a0a0a" stroke-width="3"/>
<defs><radialGradient id="chk"><stop offset="0" stop-color="#e23a64"/><stop offset="0.55" stop-color="#e8607e" stop-opacity="0.7"/><stop offset="1" stop-color="#f1c1a1" stop-opacity="0"/></radialGradient></defs><clipPath id="facec"><path d="M1145.5 687H1236.5C1236.5 712 1217 727.5 1191 727.5C1165 727.5 1145.5 712 1145.5 687Z"/></clipPath><g clip-path="url(#facec)"><circle cx="1158" cy="711" r="10" fill="url(#chk)"/><circle cx="1223" cy="711" r="10" fill="url(#chk)"/></g><circle cx="1157" cy="713" r="1" fill="#fff"/><circle cx="1224" cy="713" r="1" fill="#fff"/>
<ellipse cx="1166" cy="699" rx="8" ry="9.5" fill="#1a0e0e"/>
<ellipse cx="1209" cy="699" rx="8" ry="9.5" fill="#1a0e0e"/>
<circle cx="1168.5" cy="695.5" r="2.3" fill="#fff"/>
<circle cx="1211.5" cy="695.5" r="2.3" fill="#fff"/>
<ellipse cx="1184" cy="708.5" rx="2.8" ry="1.6" fill="none" stroke="#1a0e0e" stroke-width="1"/>
<path d="M1177 713.5Q1187.5 721 1198 713.5" fill="none" stroke="#1a0e0e" stroke-width="2.2" stroke-linecap="round"/>
<path d="M1243 710Q1244 722 1232 723H1205" fill="none" stroke="#0a0a0a" stroke-width="6" stroke-linecap="round"/>
<path d="M1243 710Q1244 722 1232 723H1205" fill="none" stroke="#6e6e6e" stroke-width="3" stroke-linecap="round"/>
<rect x="1191" y="722.5" width="23" height="14" rx="7" fill="#6e6e6e" stroke="#0a0a0a" stroke-width="2.2"/>
<rect x="1232" y="670" width="26" height="40" rx="12" fill="#f2c451" stroke="#0a0a0a" stroke-width="2"/>
<path d="M1247 677V703" stroke="#0a0a0a" stroke-width="2.2" stroke-linecap="round"/>
</svg>
<div class="abs" style="left:1137.5px;top:738.5px;font-size:17.5px;line-height:20.5px;color:#111;white-space:nowrap;-webkit-text-stroke:0.6px #111"><span style="font-family:'Liberation Mono',monospace;font-size:18px;letter-spacing:-0.5px">AI</span><span style="letter-spacing:0.2px">チャットに</span><br><span style="letter-spacing:-1px">聞いてみよう</span><span style="font-weight:normal;margin-left:2px">!</span></div>
</body></html>
